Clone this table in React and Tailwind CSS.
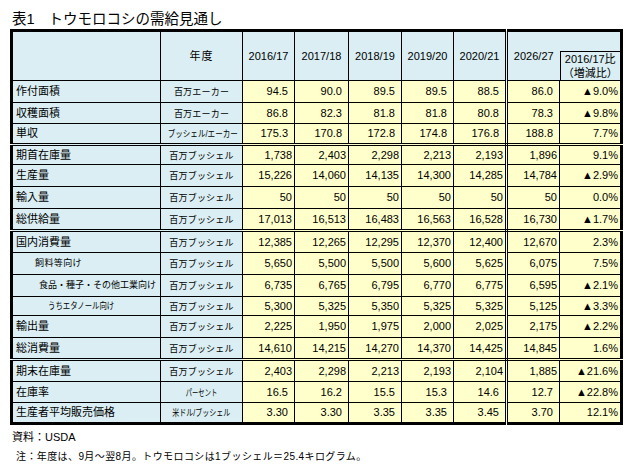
import React from "react"

const rows = [
    { label: "作付面積", unit: "百万エーカー", vals: ["94.5", "90.0", "89.5", "89.5", "88.5", "86.0"], ratio: "▲9.0%", dec: true, h: "h-[22px]" },
    { label: "収穫面積", unit: "百万エーカー", vals: ["86.8", "82.3", "81.8", "81.8", "80.8", "78.3"], ratio: "▲9.8%", dec: true, h: "h-[21px]" },
    { label: "単収", unit: "ブッシェル/エーカー", squeeze: "scale-x-[0.84]", vals: ["175.3", "170.8", "172.8", "174.8", "176.8", "188.8"], ratio: "7.7%", dec: true, dbl: true, h: "h-[21px]" },
    { label: "期首在庫量", vals: ["1,738", "2,403", "2,298", "2,213", "2,193", "1,896"], ratio: "9.1%", h: "h-[20px]" },
    { label: "生産量", vals: ["15,226", "14,060", "14,135", "14,300", "14,285", "14,784"], ratio: "▲2.9%", h: "h-[22px]" },
    { label: "輸入量", vals: ["50", "50", "50", "50", "50", "50"], ratio: "0.0%", h: "h-[22px]" },
    { label: "総供給量", vals: ["17,013", "16,513", "16,483", "16,563", "16,528", "16,730"], ratio: "▲1.7%", dbl: true, h: "h-[22px]" },
    { label: "国内消費量", vals: ["12,385", "12,265", "12,295", "12,370", "12,400", "12,670"], ratio: "2.3%", h: "h-[22px]" },
    { label: "飼料等向け", sub: "pl-[22px] text-[9px] tracking-[0.4px]", vals: ["5,650", "5,500", "5,500", "5,600", "5,625", "6,075"], ratio: "7.5%", h: "h-[22px]" },
    { label: "食品・種子・その他工業向け", sub: "pl-[26px] text-[9px]", vals: ["6,735", "6,765", "6,795", "6,770", "6,775", "6,595"], ratio: "▲2.1%", h: "h-[22px]" },
    { label: "うちエタノール向け", sub: "pl-[35px] text-[9px]", subSqueeze: true, vals: ["5,300", "5,325", "5,350", "5,325", "5,325", "5,125"], ratio: "▲3.3%", h: "h-[19px]" },
    { label: "輸出量", vals: ["2,225", "1,950", "1,975", "2,000", "2,025", "2,175"], ratio: "▲2.2%", h: "h-[22px]" },
    { label: "総消費量", vals: ["14,610", "14,215", "14,270", "14,370", "14,425", "14,845"], ratio: "1.6%", dbl: true, h: "h-[22px]" },
    { label: "期末在庫量", vals: ["2,403", "2,298", "2,213", "2,193", "2,104", "1,885"], ratio: "▲21.6%", h: "h-[22px]" },
    { label: "在庫率", unit: "パーセント", squeeze: "scale-x-[0.7]", vals: ["16.5", "16.2", "15.5", "15.3", "14.6", "12.7"], ratio: "▲22.8%", dec: true, h: "h-[21px]" },
    { label: "生産者平均販売価格", unit: "米ドル/ブッシェル", squeeze: "scale-x-[0.78]", vals: ["3.30", "3.30", "3.35", "3.35", "3.45", "3.70"], ratio: "12.1%", dec: true, h: "h-[21px]" },
]

const years = ["2016/17", "2017/18", "2018/19", "2019/20", "2020/21"]

const Unit = ({ r }) => {
    if (r.squeeze) {
        return <span className={`inline-block text-[9px] ${r.squeeze}`}>{r.unit}</span>
    }
    return <span className="text-[9px] tracking-[0.2px]">{r.unit || "百万ブッシェル"}</span>
}

const App = () => {
    return (
        <div className="w-[635px] h-[471px] bg-white text-black pt-[9px] font-['Liberation_Sans','Noto_Sans_CJK_JP',sans-serif]">
            <h1 className="pl-[12px] text-[14.5px] leading-[20px] font-normal">
                <span>表1</span>
                <span className="ml-[14px]">トウモロコシの需給見通し</span>
            </h1>

            <table className="ml-[10px] w-[610px] table-fixed border-collapse border-[3px] border-black text-[11px] leading-none">
                <colgroup>
                    <col className="w-[149px]" />
                    <col className="w-[82px]" />
                    <col className="w-[52px]" />
                    <col className="w-[54px]" />
                    <col className="w-[53px]" />
                    <col className="w-[52px]" />
                    <col className="w-[53px]" />
                    <col className="w-[53px]" />
                    <col className="w-[62px]" />
                </colgroup>
                <thead>
                    <tr>
                        <th className="h-[50px] border border-black bg-[#daeef3]"></th>
                        <th className="border border-black bg-[#daeef3] font-normal tracking-[1px] text-center">年度</th>
                        {years.map((y, i) => (
                            <th key={y} className={`border border-black bg-[#daeef3] font-normal text-center ${i === 4 ? "border-r-[3px] border-double" : ""}`}>{y}</th>
                        ))}
                        <th className="border border-black border-r-0 bg-[#daeef3] font-normal text-center">2026/27</th>
                        <th className="border border-black border-l-0 bg-[#daeef3] font-normal p-0 align-bottom">
                            <div className="h-[29px] border-t border-l border-black flex flex-col items-center justify-center leading-[14px]">
                                <span>2016/17比</span>
                                <span>（増減比）</span>
                            </div>
                        </th>
                    </tr>
                </thead>
                <tbody>
                    {rows.map(r => {
                        const dbl = r.dbl ? "border-b-[3px] border-double" : ""
                        return (
                            <tr key={r.label}>
                                <td className={`${r.h} border border-black bg-[#daeef3] whitespace-nowrap ${r.sub ? r.sub : "pl-[3px] text-[11px]"} ${dbl}`}>
                                    {r.subSqueeze ? <span className="inline-block origin-left scale-x-[0.82]">{r.label}</span> : r.label}
                                </td>
                                <td className={`border border-black bg-[#daeef3] text-center whitespace-nowrap ${dbl}`}><Unit r={r} /></td>
                                {r.vals.map((v, i) => (
                                    <td key={i} className={`border border-black bg-[#ffffcc] text-right ${r.dec ? "pr-[6px]" : "pr-[2px]"} ${i === 4 ? "border-r-[3px] border-double" : ""} ${dbl}`}>{v}</td>
                                ))}
                                <td className={`border border-black bg-[#ffffcc] text-right pr-[2px] ${dbl}`}>{r.ratio}</td>
                            </tr>
                        )
                    })}
                </tbody>
            </table>

            <p className="mt-[5px] pl-[12px] text-[11px] leading-[14px]">資料：USDA</p>
            <p className="mt-[6px] pl-[16px] text-[10px] tracking-[0.4px] leading-[14px]">注：年度は、9月～翌8月。トウモロコシは1ブッシェル＝25.4キログラム。</p>
        </div>
    )
}

export default App
